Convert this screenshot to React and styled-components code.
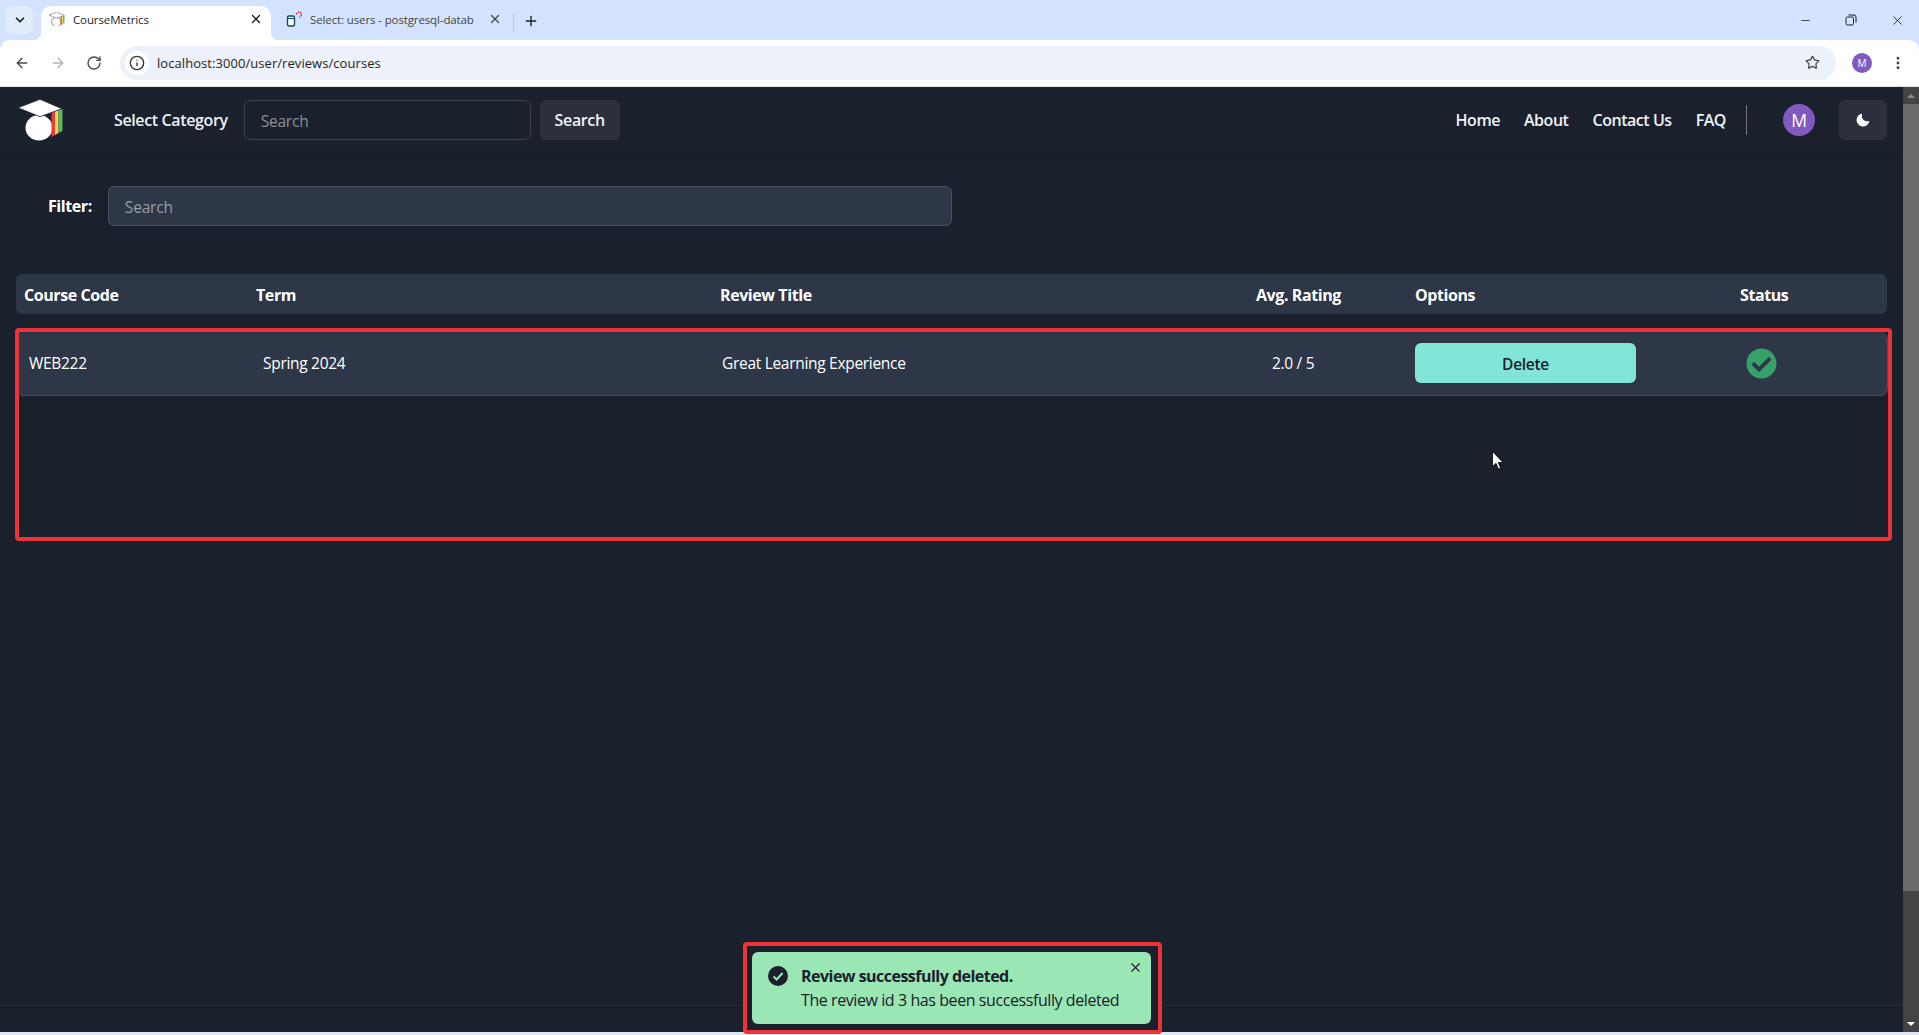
import React from 'react';
import styled, { createGlobalStyle } from 'styled-components';
import { ArrowLeft, ArrowRight, RotateCw, Info, Star, EllipsisVertical, X, Plus, ChevronDown, Minus } from 'lucide-react';
import { FaCheckCircle } from 'react-icons/fa';

const FONT = `"Open Sans", "Noto Sans", "Liberation Sans", sans-serif`;

const GlobalStyle = createGlobalStyle`
  html, body { margin: 0; padding: 0; height: 100%; overflow: hidden; background: #1a202c; }
  * { box-sizing: border-box; }
  body { font-family: ${FONT}; }
`;

const Window = styled.div`
  width: 1919px;
  height: 1035px;
  display: flex;
  flex-direction: column;
  background: #d3e3fd;
`;

/* browser chrome */
const TabStrip = styled.div`
  height: 40px;
  flex: none;
  display: flex;
  align-items: flex-end;
  padding-left: 6px;
  color: #1f1f1f;
`;
const TabMenu = styled.div`
  width: 27px;
  height: 28px;
  margin-bottom: 6px;
  margin-right: 8px;
  border-radius: 8px;
  background: #e3ecfb;
  display: flex;
  align-items: center;
  justify-content: center;
`;
const Tab = styled.div`
  position: relative;
  height: 34px;
  width: ${p => p.$width}px;
  flex: none;
  display: flex;
  align-items: center;
  padding: 0 8px 8px ${p => p.$pad}px;
  font-size: 11.5px;
  letter-spacing: -0.12px;
  color: ${p => (p.$active ? '#1f1f1f' : '#444746')};
  background: ${p => (p.$active ? '#fff' : 'transparent')};
  border-radius: 10px 10px 0 0;
  white-space: nowrap;
  ${p => p.$active && `
    &::before, &::after {
      content: '';
      position: absolute;
      bottom: 0;
      width: 8px;
      height: 8px;
    }
    &::before { left: -8px; background: radial-gradient(circle at 0 0, transparent 8px, #fff 8.5px); }
    &::after { right: -8px; background: radial-gradient(circle at 100% 0, transparent 8px, #fff 8.5px); }
  `}
`;
const TabTitle = styled.span`
  flex: 1;
  min-width: 0;
  margin: 0 10px 0 8px;
  overflow: hidden;
`;
const TabDivider = styled.div`
  width: 1px;
  height: 18px;
  margin: 0 9px 9px 3px;
  background: #a8c7fa;
`;
const NewTab = styled.div`
  display: flex;
  margin-bottom: 11px;
`;
const WindowControls = styled.div`
  margin-left: auto;
  margin-right: -1px;
  height: 40px;
  display: flex;
  align-items: center;
`;
const WindowButton = styled.div`
  width: 46px;
  display: flex;
  justify-content: center;
`;
const Toolbar = styled.div`
  height: 47px;
  flex: none;
  background: #fff;
  border-radius: 10px 10px 0 0;
  border-bottom: 1px solid #e3e3e3;
  display: flex;
  align-items: center;
  padding: 0 13px 1px 14px;
`;
const NavIcons = styled.div`
  display: flex;
  gap: 20px;
  width: 106px;
  align-items: center;
  color: #474747;
`;
const AddressBar = styled.div`
  width: 1716px;
  height: 34px;
  border-radius: 17px;
  background: #ecf1fa;
  display: flex;
  align-items: center;
  padding: 0 7px 0 5px;
  font-size: 13px;
  letter-spacing: 0.06px;
  color: #1f1f1f;
`;
const InfoBadge = styled.div`
  width: 24px;
  height: 24px;
  border-radius: 50%;
  background: #fff;
  display: flex;
  align-items: center;
  justify-content: center;
  margin-right: 8px;
`;
const StarSlot = styled.div`
  margin-left: auto;
  width: 34px;
  display: flex;
  justify-content: center;
  color: #474747;
`;
const ChromeAvatar = styled.div`
  width: 20px;
  height: 20px;
  margin-left: 16px;
  border-radius: 50%;
  background: #805ac0;
  color: #fff;
  font-size: 10px;
  display: flex;
  align-items: center;
  justify-content: center;
`;
const MenuDots = styled.div`
  margin-left: 18px;
  display: flex;
  color: #474747;
`;

/* page */
const Viewport = styled.div`
  position: relative;
  flex: 1;
  min-height: 0;
  display: flex;
  background: #1a202c;
  color: #fff;
`;
const Page = styled.div`
  flex: 1;
  min-width: 0;
  display: flex;
  flex-direction: column;
`;
const Navbar = styled.header`
  height: 67px;
  flex: none;
  display: flex;
  align-items: center;
  padding: 0 16px 1px 18px;
  border-bottom: 1px solid #161b25;
`;
const CategoryLabel = styled.span`
  margin-left: 50px;
  margin-right: 16px;
  font-size: 16px;
  font-weight: 600;
  color: #edf2f7;
  letter-spacing: -0.37px;
  white-space: nowrap;
`;
const SearchInput = styled.input`
  height: 40px;
  width: ${p => p.$width}px;
  padding: 2px 16px 0;
  border-radius: 6px;
  border: 1px solid ${p => (p.$filled ? '#4a5261' : '#3a404c')};
  background: ${p => (p.$filled ? '#2d3748' : 'transparent')};
  color: #fff;
  font: 15.5px ${FONT};
  letter-spacing: -0.2px;
  outline: none;
  &::placeholder { color: rgba(255, 255, 255, 0.5); opacity: 1; }
`;
const GhostButton = styled.button`
  height: 40px;
  width: ${p => p.$width}px;
  margin-left: ${p => p.$left || 0}px;
  border: 0;
  border-radius: 6px;
  background: #2c303b;
  color: #edf2f7;
  font: 600 16px ${FONT};
  letter-spacing: -0.37px;
  display: flex;
  align-items: center;
  justify-content: center;
  padding: 0;
`;
const NavLinks = styled.nav`
  margin-left: auto;
  display: flex;
  gap: 24px;
  font-size: 16px;
  font-weight: 600;
  letter-spacing: -0.46px;
  color: #edf2f7;
`;
const NavDivider = styled.div`
  width: 1px;
  height: 30px;
  margin: 0 36px 0 20px;
  background: #6c717b;
`;
const UserAvatar = styled.div`
  width: 32px;
  height: 32px;
  margin-right: 24px;
  border-radius: 50%;
  background: #805ac0;
  color: #fff;
  font-size: 17.5px;
  display: flex;
  align-items: center;
  justify-content: center;
`;

const Content = styled.main`
  flex: 1;
  padding: 32px 16px 0;
`;
const FilterRow = styled.div`
  display: flex;
  align-items: center;
  gap: 16px;
  padding-left: 32px;
  margin-bottom: 48px;
`;
const FilterLabel = styled.label`
  font-size: 16px;
  font-weight: 700;
  letter-spacing: -0.42px;
`;
const TableHead = styled.div`
  height: 40px;
  width: 1871px;
  border-radius: 6px;
  background: #2d3748;
  padding: 1px 0 0 8px;
  display: grid;
  grid-template-columns: 232px 464px 536px 159px 325px 1fr;
  align-items: center;
  font-size: 16px;
  font-weight: 700;
  letter-spacing: -0.42px;
`;
const Highlight = styled.section`
  width: 1877px;
  height: 213px;
  margin: 14px 0 0 -1px;
  border: 4px solid #ee3338;
  border-radius: 4px;
`;
const TableRow = styled.div`
  height: 64px;
  width: 1869px;
  padding: 0 0 1px 10px;
  background: #2d3748;
  border-bottom: 1px solid #4a5160;
  border-right: 1px solid #4a5160;
  border-radius: 0 8px 8px 4px;
  display: grid;
  grid-template-columns: 234px 459px 550px 143px 331px 1fr;
  align-items: center;
  font-size: 15.5px;
  letter-spacing: -0.3px;
`;
const DeleteButton = styled.button`
  width: 221px;
  height: 40px;
  padding: 1px 0 0;
  border: 0;
  border-radius: 6px;
  background: #81e6d9;
  color: #1a202c;
  font: 600 15.5px ${FONT};
  letter-spacing: -0.3px;
`;
const StatusIcon = styled(FaCheckCircle)`
  display: block;
  color: #38a169;
`;
const Footer = styled.footer`
  height: 27px;
  flex: none;
  border-top: 1px solid #242a36;
`;

/* scrollbar */
const ScrollTrack = styled.div`
  width: 16px;
  flex: none;
  background: #444;
  display: flex;
  flex-direction: column;
  align-items: center;
`;
const ScrollArrow = styled.div`
  height: 17px;
  flex: none;
  display: flex;
  align-items: center;
  justify-content: center;
  margin-top: ${p => (p.$bottom ? 'auto' : 0)};
  &::after {
    content: '';
    border-left: 4px solid transparent;
    border-right: 4px solid transparent;
    ${p => (p.$bottom ? 'border-top: 4px solid #fff;' : 'border-bottom: 4px solid #8d8d8d;')}
  }
`;
const ScrollThumb = styled.div`
  width: 100%;
  height: 787px;
  background: #6b6b6b;
`;
const BottomStrip = styled.div`
  height: 3px;
  flex: none;
  background: #dfe5f2;
`;

/* things lying over the page */
const Pointer = styled.svg`
  position: absolute;
  left: 1492px;
  top: 364px;
`;
const ToastFrame = styled.div`
  position: absolute;
  left: 743px;
  bottom: -2px;
  width: 419px;
  height: 92px;
  padding: 6px 7px 6px 5px;
  border: 4px solid #ee3338;
  border-radius: 4px;
  background: #1a202c;
`;
const Toast = styled.div`
  position: relative;
  height: 72px;
  border-radius: 6px;
  background: #9ae6b4;
  color: #1a202c;
  display: flex;
  padding: 12px 0 0 16px;
`;
const ToastIcon = styled.svg`
  flex: none;
  margin-top: 2px;
`;
const ToastText = styled.div`
  margin-left: 13px;
  font-size: 16px;
  line-height: 24px;
  letter-spacing: -0.42px;
  white-space: nowrap;
`;
const ToastTitle = styled.div`
  font-weight: 700;
  letter-spacing: -0.52px;
`;
const ToastClose = styled.div`
  position: absolute;
  top: 8px;
  right: 8px;
  display: flex;
`;

const CapLogo = ({ size = 46, faint }) => (
  <svg width={size} height={size * 42 / 46} viewBox="0 0 46 42">
    <ellipse cx="21" cy="28.7" rx="13.5" ry="12.8" fill="#fff" stroke={faint ? '#9a9a9a' : 'none'} strokeWidth={faint ? 3 : 0} />
    <path d="M33.5 13 L37 12 V36 L33.5 38 Z" fill="#ef3b36" />
    <path d="M37 12 L40.5 11 V34 L37 36 Z" fill="#f2d64b" />
    <path d="M40.5 11 L44.5 10 V32 L40.5 34 Z" fill="#5cb85c" />
    <path d="M0 8.7 L22 .3 L44 9.7 L22 17.7 Z" fill="#fff" stroke={faint ? '#9a9a9a' : '#1a202c'} strokeWidth={faint ? 2.5 : 0.8} />
  </svg>
);

const DbIcon = () => (
  <svg width="16" height="16" viewBox="0 0 16 16">
    <rect x="1.5" y="5" width="7" height="10" rx="1.5" fill="#fff" stroke="#0b4f5c" strokeWidth="1.4" />
    <path d="M1.5 7.5h7" stroke="#0b4f5c" strokeWidth="1" />
    <path d="M10.5 3.5 A2.5 2.5 0 1 1 13 6" fill="none" stroke="#e0202a" strokeWidth="1.4" strokeDasharray="1.6 1" />
  </svg>
);

const RestoreIcon = () => (
  <svg width="12" height="12" viewBox="0 0 12 12" fill="none" stroke="#1f1f1f" strokeWidth="1">
    <rect x="1" y="3" width="7.5" height="8" rx="1.5" />
    <path d="M3.5 1 H9 A2 2 0 0 1 11 3 V8.5" />
  </svg>
);

const MoonIcon = () => (
  <svg width="14" height="14" viewBox="0 0 24 24">
    <path
      fill="#fff"
      d="M21.4,13.7C20.6,13.9,19.8,14,19,14c-5,0-9-4-9-9c0-0.8,0.1-1.6,0.3-2.4c0.1-0.3,0-0.7-0.3-1 c-0.3-0.3-0.6-0.4-1-0.3C4.3,2.7,1,7.1,1,12c0,6.1,4.9,11,11,11c4.9,0,9.3-3.3,10.6-8.1c0.1-0.3,0-0.7-0.3-1 C22.1,13.7,21.7,13.6,21.4,13.7z"
    />
  </svg>
);

const ToastCheck = () => (
  <ToastIcon width="20" height="20" viewBox="0 0 20 20">
    <circle cx="10" cy="10" r="10" fill="#1a202c" />
    <path d="M5.5 10.5 L8.6 13.5 L14.6 7" fill="none" stroke="#9ae6b4" strokeWidth="2" />
  </ToastIcon>
);

const columns = ['Course Code', 'Term', 'Review Title', 'Avg. Rating', 'Options', 'Status'];
const links = ['Home', 'About', 'Contact Us', 'FAQ'];

const App = () => (
  <>
    <GlobalStyle />
    <Window>
      <TabStrip>
        <TabMenu><ChevronDown size={14} strokeWidth={3} /></TabMenu>
        <Tab $active $width={230} $pad={8}>
          <CapLogo size={16} faint />
          <TabTitle>CourseMetrics</TabTitle>
          <X size={14} strokeWidth={2.4} />
        </Tab>
        <Tab $width={239} $pad={15}>
          <DbIcon />
          <TabTitle>Select: users - postgresql-datab</TabTitle>
          <X size={14} strokeWidth={2.2} />
        </Tab>
        <TabDivider />
        <NewTab><Plus size={16} strokeWidth={2} /></NewTab>
        <WindowControls>
          <WindowButton><Minus size={13} strokeWidth={1.4} /></WindowButton>
          <WindowButton><RestoreIcon /></WindowButton>
          <WindowButton><X size={15} strokeWidth={1.4} /></WindowButton>
        </WindowControls>
      </TabStrip>
      <Toolbar>
        <NavIcons>
          <ArrowLeft size={16} strokeWidth={2} />
          <ArrowRight size={16} strokeWidth={2} color="#b4b4b4" />
          <RotateCw size={16} strokeWidth={2} />
        </NavIcons>
        <AddressBar>
          <InfoBadge><Info size={16} strokeWidth={2} color="#333" /></InfoBadge>
          localhost:3000/user/reviews/courses
          <StarSlot><Star size={15} strokeWidth={2} /></StarSlot>
        </AddressBar>
        <ChromeAvatar>M</ChromeAvatar>
        <MenuDots><EllipsisVertical size={16} strokeWidth={2.4} /></MenuDots>
      </Toolbar>
      <Viewport>
        <Page>
          <Navbar>
            <CapLogo />
            <CategoryLabel>Select Category</CategoryLabel>
            <SearchInput $width={287} placeholder="Search" />
            <GhostButton $width={80} $left={9}>Search</GhostButton>
            <NavLinks>
              {links.map(link => <span key={link}>{link}</span>)}
            </NavLinks>
            <NavDivider />
            <UserAvatar>M</UserAvatar>
            <GhostButton $width={48}><MoonIcon /></GhostButton>
          </Navbar>
          <Content>
            <FilterRow>
              <FilterLabel>Filter:</FilterLabel>
              <SearchInput $filled $width={844} placeholder="Search" />
            </FilterRow>
            <TableHead>
              {columns.map(col => <span key={col}>{col}</span>)}
            </TableHead>
            <Highlight>
              <TableRow>
                <span>WEB222</span>
                <span>Spring 2024</span>
                <span>Great Learning Experience</span>
                <span>2.0 / 5</span>
                <DeleteButton>Delete</DeleteButton>
                <StatusIcon size={31} />
              </TableRow>
            </Highlight>
          </Content>
          <Footer />
        </Page>
        <ScrollTrack>
          <ScrollArrow />
          <ScrollThumb />
          <ScrollArrow $bottom />
        </ScrollTrack>
        <Pointer width="12" height="19" viewBox="0 0 12 19">
          <path d="M.5 .5 V15.5 L4 12.3 L6.4 18 L8.6 17 L6.3 11.5 H11 Z" fill="#fff" stroke="#000" strokeWidth="0.8" />
        </Pointer>
        <ToastFrame>
          <Toast>
            <ToastCheck />
            <ToastText>
              <ToastTitle>Review successfully deleted.</ToastTitle>
              <div>The review id 3 has been successfully deleted</div>
            </ToastText>
            <ToastClose><X size={15} strokeWidth={1.8} /></ToastClose>
          </Toast>
        </ToastFrame>
      </Viewport>
      <BottomStrip />
    </Window>
  </>
);

export default App;
